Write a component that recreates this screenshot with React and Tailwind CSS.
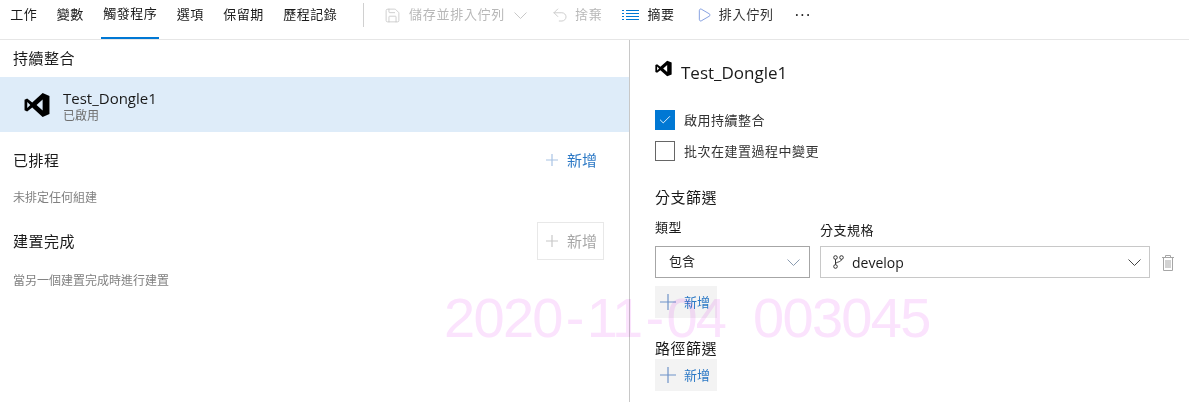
import { Undo2, Save, Play, Check } from 'lucide-react';

const fontStack = { fontFamily: '"Open Sans", "Noto Sans CJK TC", sans-serif' };

function VsLogo({ size, className }) {
  return (
    <svg width={size} height={size} viewBox="0 0 24 24" fill="#000" className={className}>
      <path d="M17.2 1 23.5 3.6V20.4L17.2 23 7.6 14.4 2.9 18 .5 16.8V7.2L2.9 6l4.7 3.6zM17.2 7 11.6 12l5.6 5zM3 9.2v5.6L5.8 12z" fillRule="evenodd" />
    </svg>
  );
}

function PlusMark({ size, color }) {
  return (
    <svg width={size} height={size} viewBox={`0 0 ${size} ${size}`} stroke={color} strokeWidth="1.2" className="shrink-0">
      <path d={`M0 ${size / 2}H${size}M${size / 2} 0V${size}`} />
    </svg>
  );
}

function Chevron({ color, className }) {
  return (
    <svg width="13" height="7" viewBox="0 0 13 7" fill="none" stroke={color} strokeWidth="1" className={`shrink-0 ${className || ''}`}>
      <path d="M.5.5l6 6 6-6" />
    </svg>
  );
}

function BranchIcon() {
  return (
    <svg width="11" height="14" viewBox="0 0 11 14" fill="none" stroke="#333" strokeWidth="1" className="shrink-0">
      <circle cx="2.5" cy="2.5" r="1.8" />
      <circle cx="8.5" cy="2.5" r="1.8" />
      <circle cx="2.5" cy="11.5" r="1.8" />
      <path d="M2.5 4.3v5.4M8.5 4.3c0 3-6 2.5-6 4.7" />
    </svg>
  );
}

function TrashIcon() {
  return (
    <svg width="12" height="16" viewBox="0 0 12 16" fill="none" stroke="#a6a6a6" strokeWidth="1" className="shrink-0">
      <path d="M0 2.5h12M3.5 2.5V.5h5v2M1.5 2.5v13h9v-13M4 5v8M6 5v8M8 5v8" />
    </svg>
  );
}

function AddButton({ disabled }) {
  return (
    <div className={`flex h-[38px] w-[67px] items-center gap-[9px] border pl-[8px] ${disabled ? 'border-[#e8e8e8] text-[#a6a6a6]' : 'border-transparent text-[#2b78c5]'}`}>
      <PlusMark size={12} color={disabled ? '#c8c8c8' : '#a9c4e4'} />
      <span className="text-[15px] leading-none">新增</span>
    </div>
  );
}

function GrayAdd() {
  return (
    <div className="flex h-8 w-[62px] items-center gap-[8px] bg-[#f3f3f3] pl-[5px] text-[#2b78c5]">
      <PlusMark size={16} color="#6f93c9" />
      <span className="text-[13px] leading-none">新增</span>
    </div>
  );
}

export default function App() {
  const tabs = ['工作', '變數', '觸發程序', '選項', '保留期', '歷程記錄'];

  return (
    <div className="relative flex h-[402px] w-[1189px] flex-col overflow-hidden bg-white text-[#1a1a1a]" style={fontStack}>
      {/* toolbar */}
      <div className="flex h-10 shrink-0 items-stretch border-b border-[#e6e6e6] text-[13px]">
        <div className="flex pl-[0.5px]">
          {tabs.map((t) => (
            <div key={t} className="px-[7.75px]">
              <div className={`flex h-[39px] items-center px-[2px] pb-[9px] tracking-[0.5px] ${t === '觸發程序' ? 'border-b-2 border-[#0078d4]' : ''}`}>
                {t}
              </div>
            </div>
          ))}
        </div>
        <div className="ml-[16px] mt-[3px] h-6 w-px bg-[#d0d0d0]" />
        <div className="flex items-center pb-[9px] tracking-[0.7px]">
          <Save size={17} strokeWidth={1.2} className="ml-[20px] text-[#c8c8c8]" />
          <span className="ml-[8px] text-[#b8b8b8]">儲存並排入佇列</span>
          <Chevron color="#c8c8c8" className="ml-[9px]" />
          <Undo2 size={18} strokeWidth={1.2} className="ml-[24px] text-[#c8c8c8]" />
          <span className="ml-[6px] text-[#b8b8b8]">捨棄</span>
          <svg width="17" height="12" viewBox="0 0 17 12" className="ml-[20px]" stroke="#0078d4" strokeWidth="1">
            <path d="M0 1.5h2M4 1.5h13M0 4.5h2M4 4.5h13M0 7.5h2M4 7.5h13M0 10.5h2M4 10.5h13" />
          </svg>
          <span className="ml-[8px]">摘要</span>
          <Play size={16} strokeWidth={1.1} className="ml-[21px] text-[#5c7fd6]" />
          <span className="ml-[7px] text-[#333]">排入佇列</span>
          <span className="ml-[21px] text-[16px] leading-none tracking-[1.5px]">···</span>
        </div>
      </div>

      <div className="flex min-h-0 flex-1">
        {/* left panel */}
        <div className="w-[630px] shrink-0 border-r border-[#c8c8c8]">
          <div className="flex h-[37px] items-center pl-[13px] text-[15px] tracking-[0.5px]">持續整合</div>
          <div className="flex h-[55px] items-center bg-[#deecf9] pl-[24px]">
            <VsLogo size={26} />
            <div className="ml-[13px] pt-[2px]">
              <div className="text-[15px] leading-[19px]">Test_Dongle1</div>
              <div className="text-[12px] leading-[15px] text-[#6f6f6f]">已啟用</div>
            </div>
          </div>
          <div className="mt-[9px] flex h-[38px] items-center justify-between pl-[13px] pr-[25px]">
            <span className="text-[15px] tracking-[0.5px]">已排程</span>
            <AddButton />
          </div>
          <div className="mt-[9px] pl-[13px] text-[12px] leading-[20px] text-[#808080]">未排定任何組建</div>
          <div className="mt-[14px] flex h-[38px] items-center justify-between pl-[13px] pr-[25px]">
            <span className="text-[15px] tracking-[0.5px]">建置完成</span>
            <AddButton disabled />
          </div>
          <div className="mt-[11px] pl-[13px] text-[12px] leading-[20px] text-[#808080]">當另一個建置完成時進行建置</div>
        </div>

        {/* right panel */}
        <div className="min-w-0 flex-1 pl-[25px]">
          <div className="mt-[19px] flex h-[26px] items-center">
            <VsLogo size={17} className="mb-[7px]" />
            <span className="ml-[9px] text-[17px] leading-none">Test_Dongle1</span>
          </div>
          <div className="mt-[25px] flex h-5 items-center">
            <div className="flex h-5 w-5 items-center justify-center bg-[#0078d4]">
              <Check size={14} strokeWidth={1.5} className="text-white" />
            </div>
            <span className="ml-[9px] pt-[2px] text-[13px] tracking-[0.5px] text-[#333]">啟用持續整合</span>
          </div>
          <div className="mt-[11px] flex h-5 items-center">
            <div className="h-5 w-5 border border-[#666]" />
            <span className="ml-[9px] pt-[2px] text-[13px] tracking-[0.5px] text-[#333]">批次在建置過程中變更</span>
          </div>
          <div className="mt-[26px] text-[15px] leading-[20px] tracking-[0.5px]">分支篩選</div>
          <div className="mt-[11px] flex items-end">
            <div className="w-[155px]">
              <div className="text-[13px] leading-[18px] tracking-[0.5px]">類型</div>
              <div className="mt-[10px] flex h-8 items-center justify-between border border-[#a6a6a6] pl-[13px] pr-[9px] text-[13px]">
                包含
                <Chevron color="#8a9bb0" />
              </div>
            </div>
            <div className="ml-[10px] w-[330px]">
              <div className="text-[13px] leading-[18px] tracking-[0.5px]">分支規格</div>
              <div className="mt-[7px] flex h-8 items-center border border-[#c8c8c8] pl-[12px] pr-[8px] text-[13px]">
                <BranchIcon />
                <span className="ml-[8px] flex-1 text-[14px]">develop</span>
                <Chevron color="#444" />
              </div>
            </div>
            <div className="mb-[7px] ml-[12px]"><TrashIcon /></div>
          </div>
          <div className="mt-[8px]"><GrayAdd /></div>
          <div className="mb-[1px] mt-[20px] text-[15px] leading-[20px] tracking-[0.5px]">路徑篩選</div>
          <GrayAdd />
        </div>
      </div>

      {/* watermark */}
      <div className="pointer-events-none absolute left-[444px] top-[293px] whitespace-pre text-[56px] leading-[50px] tracking-[-1.7px] text-[#fbe3fd] mix-blend-multiply" style={{ fontFamily: '"Liberation Sans", sans-serif' }}>
        2020<span className="px-[4px]">-</span>11<span className="px-[4px]">-</span>04  003045
      </div>
    </div>
  );
}
